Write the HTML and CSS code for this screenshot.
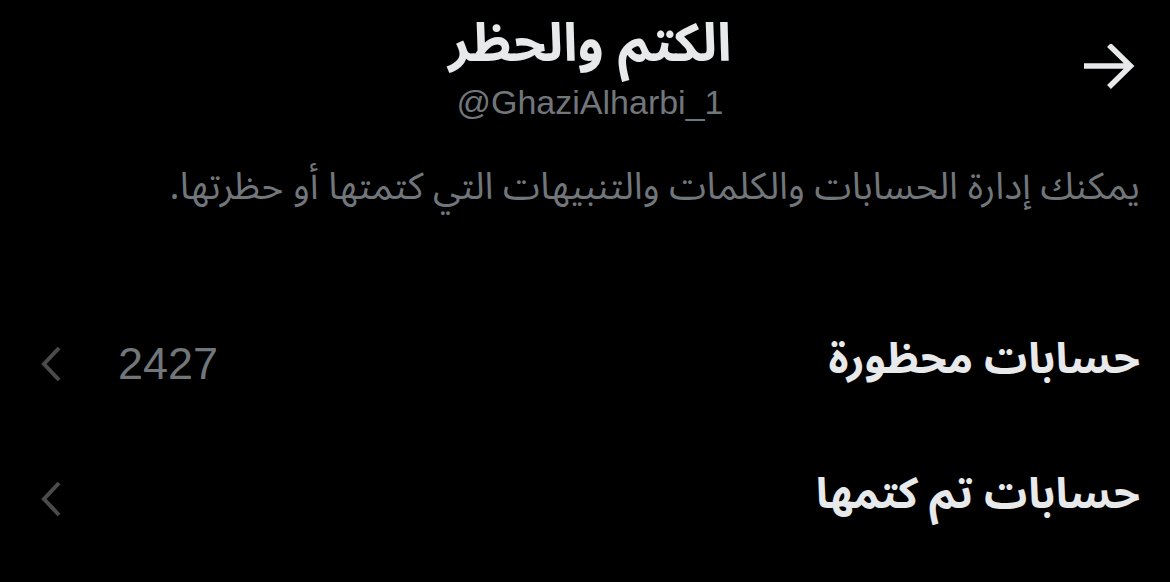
FILE: index.html
```
<!DOCTYPE html>
<html lang="ar" dir="rtl">
<head>
<meta charset="utf-8">
<link rel="stylesheet" href="styles.css">
</head>
<body>
<div class="page">
  <header class="header">
    <div class="back">
      <svg viewBox="0 0 52 48" width="52" height="48"><path d="M1 22H48M26 1L47.5 22 26 43" fill="none" stroke="#e7e9ea" stroke-width="5.5" stroke-linejoin="miter"/></svg>
    </div>
    <div class="titles">
      <h1 class="title">الكتم والحظر</h1>
      <div class="handle" dir="ltr">@GhaziAlharbi_1</div>
    </div>
  </header>
  <p class="desc">يمكنك إدارة الحسابات والكلمات والتنبيهات التي كتمتها أو حظرتها.</p>
  <div class="list">
    <div class="row">
      <span class="label">حسابات محظورة</span>
      <span class="meta"><span class="count">2427</span><svg class="chev" viewBox="0 0 22 36" width="22" height="36"><path d="M19 2L4 18l15 16" fill="none" stroke="#4a4b4c" stroke-width="4"/></svg></span>
    </div>
    <div class="row">
      <span class="label">حسابات تم كتمها</span>
      <span class="meta"><svg class="chev" viewBox="0 0 22 36" width="22" height="36"><path d="M19 2L4 18l15 16" fill="none" stroke="#4a4b4c" stroke-width="4"/></svg></span>
    </div>
  </div>
</div>
</body>
</html>
```
FILE: styles.css
```
html, body {
  margin: 0;
  padding: 0;
  background: #000;
}
body {
  width: 1170px;
  height: 582px;
  overflow: hidden;
  font-family: "Noto Sans Arabic", "Noto Sans", "DejaVu Sans", sans-serif;
  color: #e7e9ea;
}
.page {
  padding: 0 30px 0 40px;
}
.header {
  position: relative;
  display: flex;
  justify-content: center;
  padding-top: 16px;
  height: 112px;
}
.back {
  position: absolute;
  right: 5px;
  top: 44px;
  width: 52px;
  height: 48px;
}
.titles {
  text-align: center;
}
.title {
  margin: 0;
  font-size: 53px;
  font-weight: 700;
  line-height: 56px;
  color: #e7e9ea;
}
.handle {
  margin-top: 12px;
  font-family: "Liberation Sans", Arial, sans-serif;
  font-size: 34px;
  line-height: 36px;
  color: #71767b;
}
.desc {
  margin: 33px 0 0;
  font-size: 37.5px;
  line-height: 52px;
  color: #71767b;
}
.list {
  margin-top: 113px;
}
.row {
  display: flex;
  justify-content: space-between;
  align-items: center;
  height: 66px;
  margin-bottom: 69px;
}
.label {
  font-size: 43px;
  font-weight: 700;
  color: #e7e9ea;
}
.meta {
  display: flex;
  align-items: center;
  gap: 56px;
  padding-top: 10px;
}
.count {
  font-family: "Liberation Sans", Arial, sans-serif;
  font-size: 45px;
  color: #71767b;
}
.chev {
  display: block;
}
```
